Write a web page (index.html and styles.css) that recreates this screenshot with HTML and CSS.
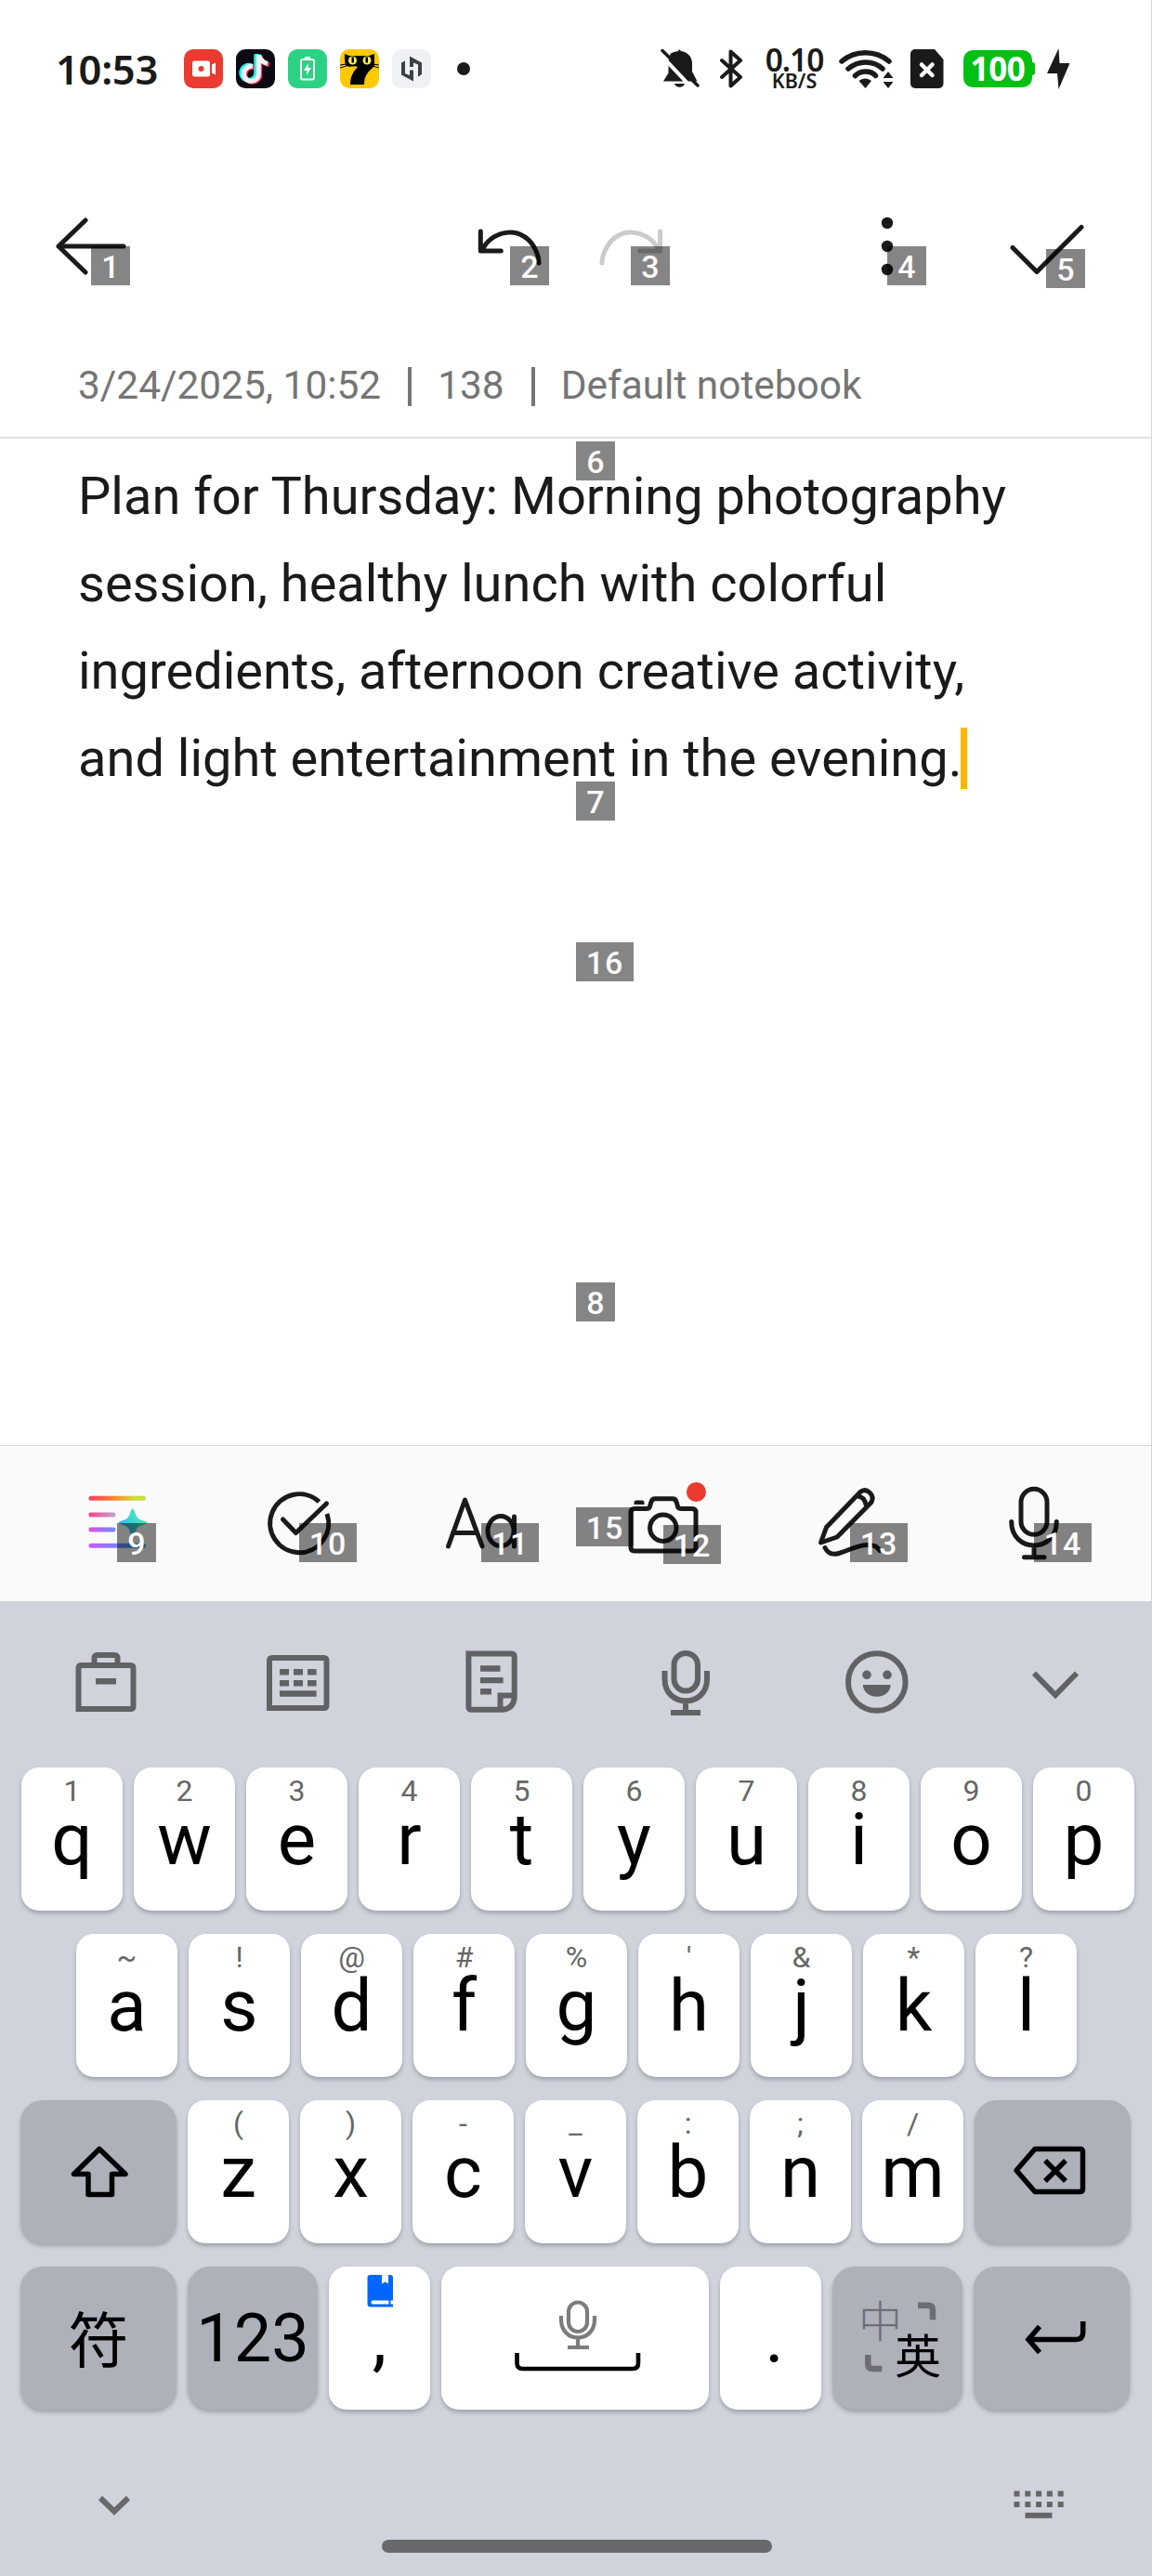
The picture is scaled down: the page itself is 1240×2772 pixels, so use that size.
FILE: index.html
```html
<!DOCTYPE html>
<html lang="en">
<head>
<meta charset="utf-8">
<title>Notes</title>
<link rel="stylesheet" href="styles.css">
</head>
<body>
<div class="screen">
  <header class="status">
    <div class="status-left">
      <span class="clock">10:53</span>
      <svg class="app" viewBox="0 0 42 42"><rect width="42" height="42" rx="10" fill="#eb3a2f"/><rect x="9" y="12.500" width="19" height="17" rx="2.500" fill="#fff"/><path d="M30 16.500l4-2v13l-4-2z" fill="#fff"/><circle cx="18.500" cy="21" r="3" fill="#eb3a2f"/></svg>
      <svg class="app" viewBox="0 0 42 42"><rect width="42" height="42" rx="10" fill="#0b0a14"/><g fill="none" stroke-width="5"><path stroke="#25f4ee" d="M17.500 18.500a8 8 0 1 0 5.500 8V6c1 5 4 8 9 9" transform="translate(-1.200 -.800)"/><path stroke="#fe2c55" d="M18.500 18.500a8 8 0 1 0 6.500 8V6c1 5 4 8 10 10" transform="translate(.8 1)"/><path stroke="#f1f1f1" d="M18 18.500a8 8 0 1 0 6.500 8V6c1 5 4 8 9.500 9.500"/></g></svg>
      <svg class="app" viewBox="0 0 42 42"><rect width="42" height="42" rx="10" fill="#2cd283"/><rect x="14" y="11" width="14" height="21.500" rx="2" fill="none" stroke="#fff" stroke-width="2"/><path fill="#fff" d="M18 8h6v3h-6zM22 15l-5 8h3.500l-.5 5 5-8h-3.500z"/></svg>
      <svg class="app" viewBox="0 0 42 42"><rect width="42" height="42" rx="10" fill="#fdc900"/><path d="M5 5l5 2h21l6-2v13c-6 6-11 9-11 20H11c0-8 3-14 8-19-4-2-8 1-12-1-2-1-2-9-2-13z"/><path d="M0 17l7-1M0 20l7-2M42 17l-7-1M42 20l-7-2" stroke="#000"/><g fill="#f5ee5a"><ellipse cx="13.500" cy="12" rx="4.500" ry="4.500"/><ellipse cx="29" cy="12" rx="4.500" ry="4.500"/></g><path d="M12.500 8.500h2.500v6h-2.500zM27.500 8.500H30v6h-2.500z"/></svg>
      <svg class="app" viewBox="0 0 42 42"><rect width="42" height="42" rx="10" fill="#f0f1f4"/><path fill="#3c4147" d="M10 14.500l4-2V26l5 2V22.500h4v12l-13-7zM19 7.500l13 7V27l-4 2.500V16.500l-5-2V19h-4z"/></svg>
      <i class="status-dot"></i>
    </div>
    <div class="status-right">
      <svg width="42" height="46" viewBox="711 51 42 46"><path fill="#1a1a1a" d="M722 57.500l3.500-1.500 4.500-1 1-2 2 2c7 1 12 6 12 13v9l5.500 10.500H714l5.500-9V70c0-5 .5-9 2.500-12.500zM726 90h11c-1 5-10 5-11 0z"/><path d="M715 58l38 40" stroke="#fff" stroke-width="4" transform="translate(-3.500 1.500)"/><path d="M713 54.500L751 92" stroke="#1a1a1a" stroke-width="3.500" stroke-linecap="round"/></svg>
      <svg width="26" height="46" viewBox="775 51 26 46"><path fill="none" stroke="#1a1a1a" stroke-width="4" stroke-linejoin="round" stroke-linecap="round" d="M777 65l20 18-10.500 9.500v-37L797 65l-20 18"/></svg>
      <div class="speed"><b>0.10</b><small>KB/S</small></div>
      <svg width="62" height="46" viewBox="902 51 62 46"><g fill="none" stroke="#1a1a1a" stroke-width="5.500" stroke-linecap="round"><path d="M906 66c14-12.500 37-12.500 51 0M913 74c11-9.500 27-9.500 37 0M920.500 81.500c6-6 17-6 22 0"/></g><path fill="#1a1a1a" d="M924.500 87c4-3.500 9.500-3.500 13.500 0L931.500 95zM950.500 84l5.500-7 5.500 7zM950.500 88h11l-5.500 7z"/></svg>
      <svg width="36" height="46" viewBox="980 51 36 46"><path fill="#1a1a1a" d="M985 53h21l9.500 11v26a5 5 0 0 1-5 5H985a5 5 0 0 1-5-5V58a5 5 0 0 1 5-5z"/><path d="M992 69.500l11.500 11.500m0-11.500L992 81" stroke="#fff" stroke-width="4.500" stroke-linecap="round"/></svg>
      <div class="battery">100</div>
      <svg width="26" height="46" viewBox="1127 52 26 46"><path fill="#1a1a1a" d="M1139.500 53l-12.500 27h11l1.500 17 12-28h-11z"/></svg>
    </div>
  </header>

  <nav class="topbar">
    <svg width="80" height="80" viewBox="58 225 80 80"><path class="line" d="M133 265H63M92 237l-29 28 29 28"/></svg>
    <svg width="80" height="80" viewBox="509 225 80 80"><path class="line" d="M517.300 249v21h22M519 269c12-24 45-26 57-1q4 8 4 15"/></svg>
    <svg class="off" width="80" height="80" viewBox="639 225 80 80"><path class="line" d="M710.600 249v21h-22M709 269c-12-24-45-26-57-1q-4 8-4 15"/></svg>
    <svg width="80" height="80" viewBox="915 225 80 80"><g fill="#1a1a1a"><circle cx="955" cy="240" r="6.200"/><circle cx="955" cy="265" r="6.200"/><circle cx="955" cy="290" r="6.200"/></g></svg>
    <svg width="80" height="80" viewBox="1087 225 80 80"><path class="line" d="M1090 266.500l26 26 48-48"/></svg>
  </nav>

  <div class="meta"><span>3/24/2025, 10:52</span><i></i><span>138</span><i></i><span>Default notebook</span></div>

  <main class="note">Plan for Thursday: Morning photography<br>session, healthy lunch with colorful<br>ingredients, afternoon creative activity,<br>and light entertainment in the evening.<i class="caret"></i></main>

  <nav class="tools">
    <svg width="80" height="90" viewBox="86 1594 80 90">
      <defs>
        <linearGradient id="g1" gradientUnits="userSpaceOnUse" x1="96" x2="157" y1="0" y2="0"><stop stop-color="#ff3d5e"/><stop offset=".4" stop-color="#ff7d33"/><stop offset=".8" stop-color="#c8e038"/></linearGradient>
        <linearGradient id="g2" gradientUnits="userSpaceOnUse" x1="96" x2="124" y1="0" y2="0"><stop stop-color="#ff3f8a"/><stop offset="1" stop-color="#b9a6d0"/></linearGradient>
        <linearGradient id="g3" gradientUnits="userSpaceOnUse" x1="96" x2="124" y1="0" y2="0"><stop stop-color="#dc50e0"/><stop offset="1" stop-color="#6f8cff"/></linearGradient>
        <linearGradient id="g4" gradientUnits="userSpaceOnUse" x1="96" x2="157" y1="0" y2="0"><stop stop-color="#c85af5"/><stop offset=".45" stop-color="#7f80ff"/><stop offset="1" stop-color="#12b0f5"/></linearGradient>
        <linearGradient id="g5" x1="0" y1=".7" x2="1" y2=".2"><stop stop-color="#2fb4ff"/><stop offset=".6" stop-color="#40dcc8"/><stop offset="1" stop-color="#52ee8c"/></linearGradient>
      </defs>
      <g fill="none" stroke-width="5" stroke-linecap="round"><path stroke="url(#g1)" d="M98 1612.300l56.500.01"/><path stroke="url(#g2)" d="M98 1630l24 .01"/><path stroke="url(#g3)" d="M98 1646l24 .01"/><path stroke="url(#g4)" d="M98 1663.300l56.500.01"/></g>
      <path fill="url(#g5)" d="M142.800 1623.500c2 0 2.500 7 5.500 10s10 3 10 5-7 2-10 5-3.500 10.500-5.500 10.500-2.500-7.500-5.500-10.500-9.500-3-9.500-5 6.500-2 9.500-5 3.500-10 5.500-10z"/>
    </svg>
    <svg width="80" height="90" viewBox="282 1594 80 90"><path class="line butt" d="M343.500 1616a31.500 31.500 0 1 0 8.500 13"/><path class="line" d="M304.500 1635l14 14.500 33-31.500"/></svg>
    <svg width="80" height="90" viewBox="478 1594 80 90"><path class="line" d="M482.500 1664l18-50 18.500 50M487.500 1649.500h26M553.500 1632v32"/><ellipse class="line" cx="539" cy="1647.500" rx="14" ry="16"/></svg>
    <svg width="86" height="90" viewBox="674 1594 86 90"><path class="line" d="M683 1623.500h13c4 0 3-2 5-7.500q1-3.300 4-3.300h19q3 0 4 3.300c2 5.500 1 7.500 5 7.500h12q4 0 4 4v37.500q0 4-4 4h-62q-4 0-4-4v-37.500q0-4 4-4z"/><circle class="line" cx="713.800" cy="1644.300" r="14.200"/><path fill="#1a1a1a" d="M682.500 1619v-2q0-2.500 2.500-2.500h6q2.500 0 2.500 2.500v2z"/><circle cx="749.400" cy="1605.500" r="10.500" fill="#eb3a2f"/></svg>
    <svg width="80" height="90" viewBox="874 1594 80 90"><path class="line" d="M883.500 1660l6-16.500 36.500-38q5-4 10 .5t2 10.500l-37 37.500zM923.500 1610q7 1 8.500 9M888 1665.500c3 6 8 8 15 6 10-3 20-9 31-9 8 0 10 2 13 6"/></svg>
    <svg width="80" height="90" viewBox="1073 1594 80 90"><rect class="line" x="1099" y="1602.300" width="28" height="49" rx="14"/><path class="line" d="M1088.700 1637.500c0 34 48.600 34 48.600 0M1113 1663v12M1102.500 1675.800h21.500"/></svg>
  </nav>

  <section class="keyboard">
    <nav class="kb-tools">
      <svg width="80" height="80" viewBox="74 1770 80 80"><path class="k" d="M84.500 1839v-44q0-3 3-3h53q3 0 3 3v41q0 3-3 3zM101.500 1792v-7.500q0-3.500 3.500-3.500h18q3.500 0 3.500 3.500v7.500"/><path class="kf" d="M103 1806h22v6.500h-22z"/></svg>
      <svg width="80" height="80" viewBox="281 1770 80 80"><path class="k" d="M290 1838v-51q0-3 3-3h55.500q3 0 3 3v48q0 3-3 3z"/><path class="kf" d="M301 1796h10v6.500h-10zm15 0h10v6.500h-10zm15 0h9.600v6.500h-9.600zM301 1808h10v6.500h-10zm15 0h10v6.500h-10zm15 0h9.600v6.500h-9.600zM301 1819.300h39.600v6.500H301z"/></svg>
      <svg width="80" height="80" viewBox="489 1770 80 80"><path class="k" d="M504.400 1779.500h46q3.300 0 3.300 3.300v44q-1 12-13 13h-33q-3.300 0-3.300-3.300zM538.500 1840v-15.500h15"/><path class="kf" d="M517 1792.300h21.500v6.400H517zm0 12.700h24.600v6.200H517zm0 12h12v6.500h-12z"/></svg>
      <svg width="80" height="80" viewBox="698 1770 80 80"><rect class="k" x="725.500" y="1779" width="25.500" height="40.500" rx="12.700"/><path class="k" d="M715.500 1798v9c0 31 45.500 31 45.500 0v-9M738 1830v12M722 1843h32"/></svg>
      <svg width="80" height="80" viewBox="904 1770 80 80"><circle class="k" cx="943.800" cy="1810" r="30.800"/><circle class="kf" cx="933" cy="1802.300" r="4.800"/><circle class="kf" cx="955" cy="1802.300" r="4.800"/><path class="kf" d="M928.800 1813h30c-1 17-29 17-30 0z"/></svg>
      <svg width="80" height="80" viewBox="1096 1770 80 80"><path class="k" d="M1113 1800.500l23 23.500 23-23.500"/></svg>
    </nav>
    <div class="row">
      <div class="key"><small>1</small><b>q</b></div><div class="key"><small>2</small><b>w</b></div><div class="key"><small>3</small><b>e</b></div><div class="key"><small>4</small><b>r</b></div><div class="key"><small>5</small><b>t</b></div><div class="key"><small>6</small><b>y</b></div><div class="key"><small>7</small><b>u</b></div><div class="key"><small>8</small><b>i</b></div><div class="key"><small>9</small><b>o</b></div><div class="key"><small>0</small><b>p</b></div>
    </div>
    <div class="row row-home">
      <div class="key"><small>~</small><b>a</b></div><div class="key"><small>!</small><b>s</b></div><div class="key"><small>@</small><b>d</b></div><div class="key"><small>#</small><b>f</b></div><div class="key"><small>%</small><b>g</b></div><div class="key"><small>'</small><b>h</b></div><div class="key"><small>&amp;</small><b>j</b></div><div class="key"><small>*</small><b>k</b></div><div class="key"><small>?</small><b>l</b></div>
    </div>
    <div class="row row-fn">
      <div class="key fn wide"><svg width="168" height="154" viewBox="22 2260 168 154"><path class="b" d="M107 2312.500l-27.500 27h15.500v22h25.500v-22h14.500z"/></svg></div>
      <div class="key"><small>(</small><b>z</b></div><div class="key"><small>)</small><b>x</b></div><div class="key"><small>-</small><b>c</b></div><div class="key"><small>_</small><b>v</b></div><div class="key"><small>:</small><b>b</b></div><div class="key"><small>;</small><b>n</b></div><div class="key"><small>/</small><b>m</b></div>
      <div class="key fn wide"><svg width="168" height="154" viewBox="1049 2260 168 154"><path class="b" d="M1094 2335.500l20-23h48.500q3 0 3 3v40q0 3-3 3H1114z"/><path class="b sq" d="M1125 2325l22 22m0-22l-22 22"/></svg></div>
    </div>
    <div class="row row-fn">
      <div class="key fn wide sym">符</div>
      <div class="key fn mid num">123</div>
      <div class="key punct"><svg width="109" height="50" viewBox="354 2439 109 50"><path fill="#06f" d="M399 2448h12v9.500l3.500-2 3.500 2V2448h2q3 0 3 3v24.500h-22.500q-2 1.700 0 4h18v-4h2v4h2.500v3h-24q-3.500 0-3.500-3.500V2451q0-3 3-3z"/></svg><b>,</b></div>
      <div class="key space"><svg width="288" height="154" viewBox="475 2439 288 154"><g fill="none" stroke="#7c7c7c" stroke-width="4.200"><rect x="612" y="2477.500" width="20" height="31.500" rx="10"/><path d="M604 2492v4c0 26 36 26 36 0v-4M622 2517v9M611 2526h23"/></g><path fill="none" stroke="#000" stroke-width="4.600" d="M556.500 2532v11q0 6 6 6h118.500q6 0 6-6v-11"/></svg></div>
      <div class="key punct stop"><small></small><b>.</b></div>
      <div class="key fn mid lang"><span class="zh">中</span><span class="en">英</span><svg width="140" height="154" viewBox="896 2439 140 154"><path fill="none" stroke="#6c6e74" stroke-width="6.500" d="M988 2480.700h11q5 0 5 5v10.500M934.300 2534v10q0 5 5 5h10"/></svg></div>
      <div class="key fn wide"><svg width="168" height="154" viewBox="1048 2439 168 154"><path class="b sq" d="M1165.700 2498v12q0 7.500-7.500 7.500H1108M1119 2503.500l-12 14 12 14"/></svg></div>
    </div>
    <footer class="dock">
      <svg width="40" height="40" viewBox="103 2676 40 40"><path fill="none" stroke="#6a6a6a" stroke-width="6" d="M108 2688l15 14.500 15-14.500"/></svg>
      <i class="home"></i>
      <svg width="60" height="40" viewBox="1088 2676 60 40"><path stroke="#666" stroke-width="6" stroke-dasharray="6 5.800" d="M1091.500 2683.500h54M1091.500 2695h54"/><path stroke="#666" stroke-width="6" d="M1103.500 2706.800h29"/></svg>
    </footer>
  </section>

  <span class="tag t1">1</span><span class="tag t2">2</span><span class="tag t3">3</span><span class="tag t4">4</span><span class="tag t5">5</span><span class="tag t6">6</span><span class="tag t7">7</span><span class="tag t8">8</span><span class="tag t9">9</span><span class="tag two t10">10</span><span class="tag two t11">11</span><span class="tag two t12">12</span><span class="tag two t13">13</span><span class="tag two t14">14</span><span class="tag two t15">15</span><span class="tag two t16">16</span>
</div>
</body>
</html>
```
FILE: styles.css
```css
* { box-sizing: border-box; }
body { margin: 0; background: #fff; font-family: Roboto, "Noto Sans CJK SC", sans-serif; color: #1a1a1a; }
svg { display: block; flex: none; }
i { font-style: normal; }
.screen { position: relative; width: 1240px; height: 2772px; display: flex; flex-direction: column; overflow: hidden; background: #fff; }

/* status bar */
.status { height: 148px; display: flex; align-items: center; }
.status-left { width: 711px; display: flex; align-items: center; gap: 14px; padding-left: 60px; }
.clock { width: 124px; font: 600 43.500px/60px "Noto Sans", sans-serif; letter-spacing: -.3px; white-space: nowrap; }
.app { width: 42px; height: 42px; }
.status-dot { width: 14px; height: 14px; margin-left: 14px; border-radius: 50%; background: #1a1a1a; }
.status-right { display: grid; grid-template-columns: 64px 49px 78px 78px 57px 90px 26px; align-items: center; }
.speed { width: 62px; display: flex; flex-direction: column; align-items: center; font-family: "Noto Sans", sans-serif; font-weight: 600; }
.speed b { font-size: 33.500px; line-height: 25px; font-weight: 600; letter-spacing: -1px; }
.speed small { font-size: 21.500px; line-height: 19px; }
.battery { position: relative; width: 74px; height: 40px; border-radius: 10px; background: #00c014; color: #fff; font: 700 35px/39px "Noto Sans", sans-serif; text-align: center; letter-spacing: -.3px; }
.battery::after { content: ""; position: absolute; left: 73px; top: 13px; width: 4px; height: 14px; border-radius: 0 3px 3px 0; background: #00c014; }

/* note header */
.topbar { height: 225px; padding: 77px 0 0 58px; display: grid; grid-template-columns: 451px 130px 276px 172px 80px; }
.line { fill: none; stroke: #1a1a1a; stroke-width: 5; stroke-linecap: round; stroke-linejoin: round; }
.butt { stroke-linecap: butt; }
.off .line { stroke: #cccacc; }
.meta { height: 99px; padding-left: 84px; display: flex; border-bottom: 2px solid #e2e2e2; font-size: 42.400px; line-height: 84px; color: #757575; white-space: nowrap; }
.meta i { width: 4px; height: 42px; margin: 22px 28px 0 29px; background: #757575; }

.note { height: 1083px; padding: 15px 0 0 84px; font-size: 56px; line-height: 94px; white-space: nowrap; }
.caret { display: inline-block; width: 7px; height: 66px; margin-left: -2px; vertical-align: -14px; background: #ffb400; }

/* editing tools */
.tools { height: 168px; padding: 38px 0 0 86px; border-top: 1px solid #d8d8d8; background: #fafafa; display: grid; grid-template-columns: 196px 196px 196px 200px 199px 80px; }

/* keyboard */
.keyboard { height: 1049px; background: #d0d3dc; }
.kb-tools { height: 179px; padding: 47px 0 0 74px; display: grid; grid-template-columns: 207px 208px 209px 206px 192px 80px; }
.k { fill: none; stroke: #606264; stroke-width: 6; }
.kf { fill: #606264; }
.b { fill: none; stroke: #000; stroke-width: 5.500px; stroke-linejoin: round; }
.sq { stroke-linejoin: miter; }
.row { display: flex; gap: 12px; height: 154px; margin-bottom: 25px; padding-left: 23px; }
.row-home { padding-left: 82px; }
.row-fn { padding-left: 22px; }
.key { position: relative; flex: none; width: 109px; height: 154px; border-radius: 19px; background: #fff; box-shadow: 0 3px 4px rgba(60, 64, 75, .32); display: flex; flex-direction: column; align-items: center; color: #000; }
.key small { height: 50px; font-size: 32px; line-height: 50px; color: #666; }
.key b { font-size: 78px; line-height: 55px; font-weight: 400; }
.fn { background: #aeb1ba; border-radius: 24px; }
.wide { width: 168px; }
.mid { width: 140px; }
.space { width: 288px; }
.sym { font: 400 65px/150px "Noto Sans CJK SC", sans-serif; }
.num { font-size: 72px; line-height: 156px; }
.punct b { line-height: 54px; }
.stop b { padding-left: 8px; }
.lang span { position: absolute; line-height: 1; font-family: "Noto Sans CJK SC", sans-serif; font-weight: 400; }
.lang .zh { left: 28px; top: 32px; font-size: 47px; color: #6c6e74; font-weight: 300; }
.lang .en { left: 67px; top: 68px; font-size: 50px; }
.dock { display: flex; padding: 58px 92px 0 103px; justify-content: space-between; }
.home { width: 420px; height: 14px; margin: 57px 0 0 10px; border-radius: 7px; background: #68696d; }
.screen::after { content: ""; position: absolute; right: 0; top: 0; width: 1px; height: 1723px; background: #d4d4d4; }

/* numbered markers lying over the controls */
.tag { position: absolute; width: 42px; height: 42px; background: rgba(0, 0, 0, .48); color: #fffbfb; font: 500 34px/45px Roboto, sans-serif; text-align: center; }
.two { width: 62px; letter-spacing: 1px; }
.t1 { left: 98px; top: 265px; }
.t2 { left: 549px; top: 265px; }
.t3 { left: 679px; top: 265px; }
.t4 { left: 955px; top: 265px; }
.t5 { left: 1126px; top: 268px; }
.t6 { left: 620px; top: 475px; }
.t7 { left: 620px; top: 841px; }
.t8 { left: 620px; top: 1380px; }
.t9 { left: 126px; top: 1639px; }
.t10 { left: 322px; top: 1639px; }
.t11 { left: 518px; top: 1639px; }
.t12 { left: 714px; top: 1641px; }
.t13 { left: 915px; top: 1639px; }
.t14 { left: 1113px; top: 1639px; }
.t15 { left: 620px; top: 1622px; }
.t16 { left: 620px; top: 1014px; }
```
